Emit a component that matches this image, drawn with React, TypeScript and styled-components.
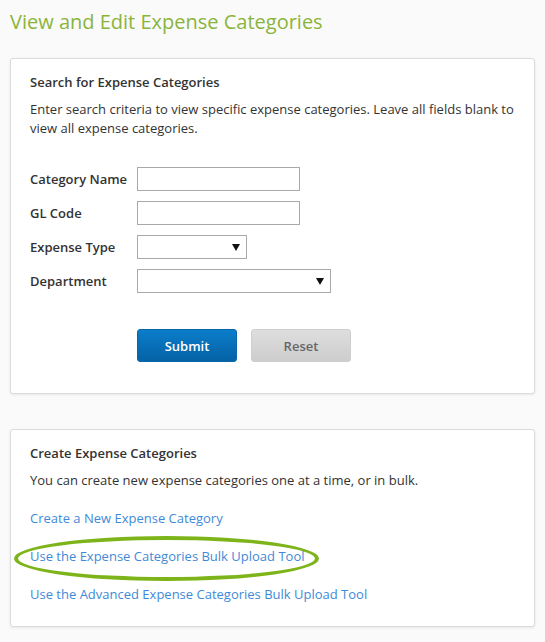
import React from "react";
import styled, { createGlobalStyle } from "styled-components";

const Global = createGlobalStyle`
  html, body { margin: 0; padding: 0; background: #fafafa; }
  body { font-family: "Open Sans", "Liberation Sans", sans-serif; color: #333; }
  * { box-sizing: border-box; }
`;

const Page = styled.div`
  padding: 8px 10px 14px 10px;
  display: flex;
  flex-direction: column;
`;

const Title = styled.h1`
  margin: 0;
  font-size: 20px;
  line-height: 28px;
  font-weight: 400;
  color: #8ab43c;
`;

const Card = styled.section<{ $top: number; $bottom: number }>`
  margin-top: ${(p) => p.$top}px;
  background: #fff;
  border: 1px solid #dcdcdc;
  border-radius: 3px;
  box-shadow: 0 1px 3px rgba(0, 0, 0, 0.08);
  padding: 14px 20px ${(p) => p.$bottom}px 19px;
`;

const CardHeading = styled.h2`
  margin: 0;
  font-size: 13px;
  line-height: 18px;
  font-weight: 600;
  color: #333;
`;

const Para = styled.p`
  margin: 9px 0 0 0;
  font-size: 13px;
  line-height: 19px;
  color: #333;
`;

const Form = styled.div`
  margin-top: 29px;
  display: flex;
  flex-direction: column;
  gap: 10px;
`;

const Row = styled.div`
  display: flex;
  align-items: center;
  height: 24px;
`;

const Label = styled.label`
  width: 107px;
  font-size: 13px;
  font-weight: 600;
  color: #333;
`;

const TextBox = styled.input`
  width: 163px;
  height: 24px;
  border: 1px solid #a9a9a9;
  background: #fff;
  padding: 0 4px;
  font-family: inherit;
  font-size: 13px;
  outline: none;
`;

const SelectBox = styled.div<{ $w: number }>`
  width: ${(p) => p.$w}px;
  height: 24px;
  border: 1px solid #a9a9a9;
  background: #fff;
  display: flex;
  align-items: center;
  justify-content: flex-end;
  padding-right: 6px;
`;

const Arrow = styled.span`
  width: 0;
  height: 0;
  border-left: 4px solid transparent;
  border-right: 4px solid transparent;
  border-top: 7px solid #111;
`;

const Buttons = styled.div`
  margin-top: 36px;
  padding-left: 107px;
  display: flex;
  gap: 14px;
`;

const Button = styled.button<{ $primary?: boolean }>`
  width: 100px;
  height: 33px;
  border-radius: 3px;
  font-family: inherit;
  font-size: 13px;
  font-weight: 600;
  cursor: pointer;
  border: 1px solid ${(p) => (p.$primary ? "#0866ac" : "#cfcfcf")};
  color: ${(p) => (p.$primary ? "#fff" : "#666")};
  background: ${(p) =>
    p.$primary
      ? "linear-gradient(#0b7dca, #0562a6)"
      : "linear-gradient(#dedede, #cdcdcd)"};
`;

const Links = styled.div`
  margin-top: 19px;
  display: flex;
  flex-direction: column;
  gap: 19px;
`;

const LinkRow = styled.div`
  position: relative;
  height: 19px;
  display: flex;
  align-items: center;
`;

const Link = styled.a`
  font-size: 13px;
  line-height: 19px;
  color: #3f8ad8;
  text-decoration: none;
  position: relative;
  z-index: 1;
`;

const Ring = styled.span`
  position: absolute;
  left: -16px;
  top: -11px;
  width: 305px;
  height: 45px;
  border: 4px solid #7db419;
  border-radius: 50%;
  pointer-events: none;
`;

export default function App() {
  return (
    <>
      <Global />
      <Page>
        <Title>View and Edit Expense Categories</Title>
        <Card $top={22} $bottom={31}>
          <CardHeading>Search for Expense Categories</CardHeading>
          <Para>
            Enter search criteria to view specific expense categories. Leave all fields blank to
            view all expense categories.
          </Para>
          <Form>
            <Row>
              <Label>Category Name</Label>
              <TextBox />
            </Row>
            <Row>
              <Label>GL Code</Label>
              <TextBox />
            </Row>
            <Row>
              <Label>Expense Type</Label>
              <SelectBox $w={110}>
                <Arrow />
              </SelectBox>
            </Row>
            <Row>
              <Label>Department</Label>
              <SelectBox $w={194}>
                <Arrow />
              </SelectBox>
            </Row>
          </Form>
          <Buttons>
            <Button $primary>Submit</Button>
            <Button>Reset</Button>
          </Buttons>
        </Card>
        <Card $top={35} $bottom={22}>
          <CardHeading>Create Expense Categories</CardHeading>
          <Para>You can create new expense categories one at a time, or in bulk.</Para>
          <Links>
            <LinkRow>
              <Link href="#">Create a New Expense Category</Link>
            </LinkRow>
            <LinkRow>
              <Ring />
              <Link href="#">Use the Expense Categories Bulk Upload Tool</Link>
            </LinkRow>
            <LinkRow>
              <Link href="#">Use the Advanced Expense Categories Bulk Upload Tool</Link>
            </LinkRow>
          </Links>
        </Card>
      </Page>
    </>
  );
}
